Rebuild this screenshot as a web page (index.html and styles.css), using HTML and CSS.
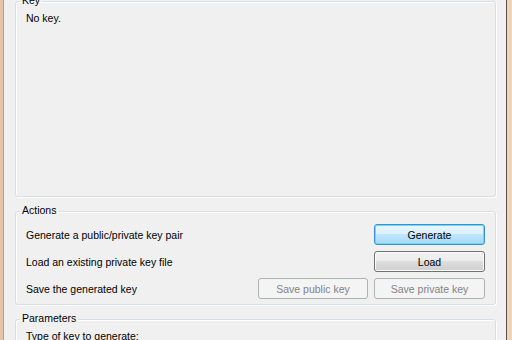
FILE: index.html
```html
<!DOCTYPE html>
<html lang="en">

<head>
  <meta charset="UTF-8">
  <meta name="viewport" content="width=device-width, initial-scale=1.0">
  <title>PuTTY Key Generator</title>
  <link rel="stylesheet" href="styles.css">
</head>

<body>
  <div id="window">
    <div class="frame-left"></div>

    <div id="client">
      <fieldset class="group key-group">
        <legend>Key</legend>
        <p class="key-text">No key.</p>
      </fieldset>

      <fieldset class="group">
        <legend>Actions</legend>
        <div class="row">
          <span>Generate a public/private key pair</span>
          <button class="btn default">Generate</button>
        </div>
        <div class="row">
          <span>Load an existing private key file</span>
          <button class="btn">Load</button>
        </div>
        <div class="row">
          <span>Save the generated key</span>
          <div class="buttons">
            <button class="btn small" disabled>Save public key</button>
            <button class="btn" disabled>Save private key</button>
          </div>
        </div>
      </fieldset>

      <fieldset class="group params">
        <legend>Parameters</legend>
        <p class="param-text">Type of key to generate:</p>
      </fieldset>
    </div>

    <div class="frame-right"></div>
  </div>
</body>

</html>
```

FILE: styles.css
```css
body {
  margin: 0;
  overflow: hidden;
  font-family: "Liberation Sans", Tahoma, sans-serif;
  font-size: 10.5px;
  color: #000;
}

#window {
  display: flex;
  height: 340px;
  overflow: hidden;
}

.frame-left {
  width: 3px;
  background-color: #e4c4a8;
  border-right: 1px solid #c09e82;
}

.frame-right {
  width: 5px;
  background-color: #eed4bd;
  border-left: 1px solid #5f5049;
}

#client {
  flex: 1;
  background-color: #f0f0f0;
  padding: 0 10px 0 11px;
  overflow: hidden;
}

/* group boxes */
.group {
  margin: 8px 0 0 0;
  padding: 0;
  min-width: 0;
  border: 1px solid #d5dfe5;
  border-radius: 3px;
  box-shadow: inset 1px 1px 0 #fff, 1px 1px 0 #fff;
}

.group legend {
  position: relative;
  top: -1px;
  margin-left: 4px;
  padding: 0 2px;
  line-height: 13px;
}

.key-group {
  margin-top: -5px;
}

.key-text {
  margin: 0;
  padding: 4px 0 0 10px;
  height: 184px;
  line-height: 13px;
}

.param-text {
  margin: 0;
  padding: 4px 0 0 10px;
  line-height: 13px;
  height: 30px;
}

/* action rows */
.group .row:first-of-type {
  margin-top: 6px;
}

.row {
  display: flex;
  align-items: center;
  justify-content: space-between;
  height: 21px;
  padding: 0 10px;
  margin-bottom: 6px;
}

.row:last-child {
  margin-bottom: 5px;
}

.buttons {
  display: flex;
  gap: 6px;
}

.btn {
  width: 111px;
  height: 21px;
  padding: 0;
  font-family: "Liberation Sans", Tahoma, sans-serif;
  font-size: 10.5px;
  color: #000;
  border: 1px solid #707070;
  border-radius: 3px;
  background: linear-gradient(#f2f2f2, #ebebeb 50%, #dddddd 50%, #cfcfcf);
  box-shadow: inset 0 0 0 1px #fcfcfc;
}

.btn.small {
  width: 110px;
}

.btn.default {
  border-color: #3c8fd0;
  background: linear-gradient(#eaf6fd, #d9f0fc 50%, #bee6fd 50%, #a7d9f5);
  box-shadow: inset 0 0 0 1px #6fd6f8;
}

.btn:disabled {
  color: #838383;
  border-color: #adb2b5;
  background: #f4f4f4;
  box-shadow: none;
}
```
